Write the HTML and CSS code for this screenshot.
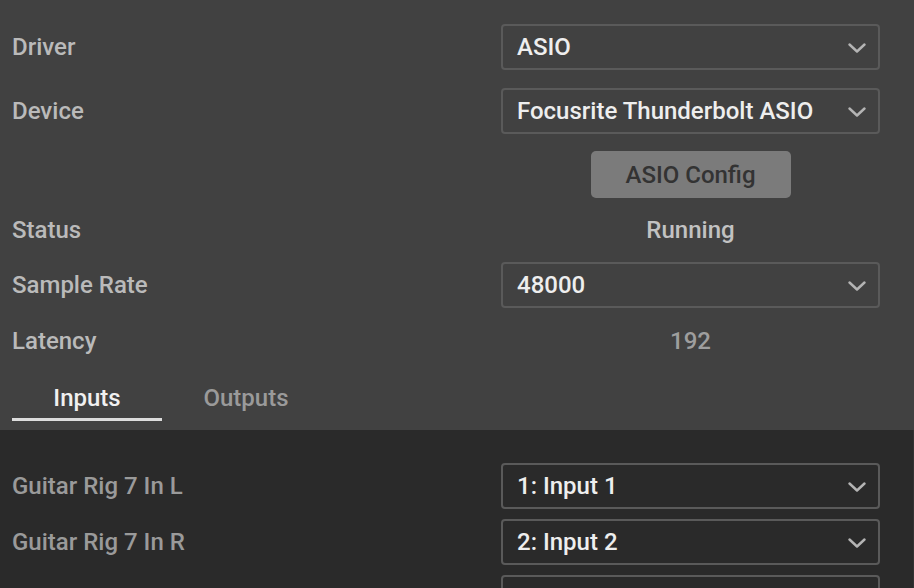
FILE: index.html
```html
<!DOCTYPE html>
<html>
<head>
<meta charset="utf-8">
<link rel="stylesheet" href="styles.css">
</head>
<body>
<div class="app">
  <section class="settings">
    <div class="grid">
      <div class="label">Driver</div>
      <div class="select"><span>ASIO</span><svg class="chev" viewBox="0 0 18 10"><path d="M1.5 1.5 L9 8.5 L16.5 1.5"/></svg></div>

      <div class="label">Device</div>
      <div class="select"><span>Focusrite Thunderbolt ASIO</span><svg class="chev" viewBox="0 0 18 10"><path d="M1.5 1.5 L9 8.5 L16.5 1.5"/></svg></div>

      <div class="label"></div>
      <div class="btn-wrap"><button class="btn">ASIO Config</button></div>

      <div class="label text-row">Status</div>
      <div class="value text-row status">Running</div>

      <div class="label">Sample Rate</div>
      <div class="select"><span>48000</span><svg class="chev" viewBox="0 0 18 10"><path d="M1.5 1.5 L9 8.5 L16.5 1.5"/></svg></div>

      <div class="label text-row latency-row">Latency</div>
      <div class="value text-row latency-row latency">192</div>
    </div>
    <div class="tabs">
      <div class="tab active">Inputs</div>
      <div class="tab">Outputs</div>
    </div>
  </section>
  <section class="channels">
    <div class="grid ch-grid">
      <div class="label dim">Guitar Rig 7 In L</div>
      <div class="select"><span>1: Input 1</span><svg class="chev" viewBox="0 0 18 10"><path d="M1.5 1.5 L9 8.5 L16.5 1.5"/></svg></div>

      <div class="label dim">Guitar Rig 7 In R</div>
      <div class="select"><span>2: Input 2</span><svg class="chev" viewBox="0 0 18 10"><path d="M1.5 1.5 L9 8.5 L16.5 1.5"/></svg></div>

      <div class="label dim"></div>
      <div class="select"></div>
    </div>
  </section>
</div>
</body>
</html>
```

FILE: styles.css
```css
html, body {
  margin: 0;
  padding: 0;
  height: 100%;
  overflow: hidden;
  background: #2a2a2a;
}

body {
  font-family: Roboto, "Noto Sans", "Liberation Sans", sans-serif;
  font-size: 24px;
  font-weight: 500;
  -webkit-font-smoothing: antialiased;
}

.app {
  width: 914px;
  height: 588px;
  overflow: hidden;
  display: flex;
  flex-direction: column;
}

.settings {
  background: #414141;
  padding: 24px 0 9px 12px;
  flex: none;
}

.grid {
  display: grid;
  grid-template-columns: 489px 379px;
  row-gap: 18px;
  align-items: center;
}

.label {
  color: #bababa;
  line-height: 27px;
  padding-top: 1px;
}

.label.dim {
  color: #9a9a9a;
}

.select {
  box-sizing: border-box;
  height: 46px;
  border: 2px solid #5a5a5a;
  border-radius: 4px;
  display: flex;
  align-items: center;
  justify-content: space-between;
  padding: 0 12px 0 14px;
  color: #eeeeee;
}

.chev {
  width: 18px;
  height: 10px;
  margin-top: 1px;
}

.chev path {
  fill: none;
  stroke: #b4b4b4;
  stroke-width: 2.4;
  stroke-linecap: round;
  stroke-linejoin: round;
}

.btn-wrap {
  display: flex;
  justify-content: center;
}

.btn {
  box-sizing: border-box;
  width: 200px;
  height: 47px;
  border: none;
  border-radius: 5px;
  background: #7b7b7b;
  color: #333333;
  font-family: inherit;
  font-size: 24px;
  font-weight: 500;
  padding: 0;
  margin-top: -1px;
}

.text-row {
  line-height: 27px;
}

.value.text-row {
  padding-top: 1px;
}

.latency-row {
  line-height: 29px;
}

.value {
  text-align: center;
}

.status {
  color: #c2c2c2;
}

.latency {
  color: #9e9e9e;
}

.tabs {
  display: flex;
  gap: 9px;
  margin-top: 18px;
}

.tab {
  box-sizing: border-box;
  width: 150px;
  height: 47px;
  text-align: center;
  padding-top: 10px;
  color: #9a9a9a;
  border-bottom: 3px solid transparent;
}

.tab.active {
  color: #f0f0f0;
  border-bottom-color: #dcdcdc;
}

.channels {
  flex: 1;
  background: #2a2a2a;
  padding: 33px 0 0 12px;
  border-right: 1px solid #333333;
}

.ch-grid {
  row-gap: 10px;
}
```
